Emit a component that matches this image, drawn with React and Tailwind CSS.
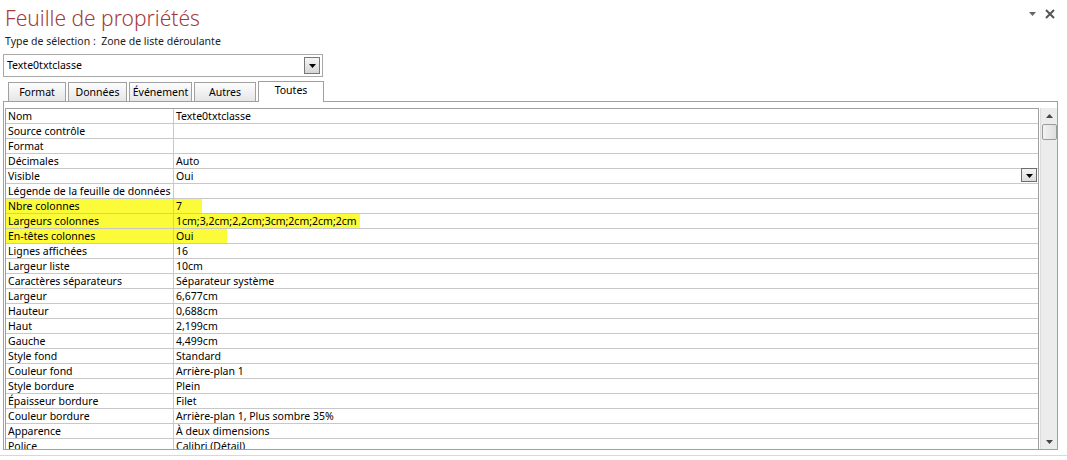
import React from 'react';

// Access property sheet, "Toutes" tab.
const ROWS = [
  ['Nom', 'Texte0txtclasse'],
  ['Source contrôle', ''],
  ['Format', ''],
  ['Décimales', 'Auto'],
  ['Visible', 'Oui', { dropdown: true }],
  ['Légende de la feuille de données', ''],
  ['Nbre colonnes', '7', { mark: 'w-[28px]' }],
  ['Largeurs colonnes', '1cm;3,2cm;2,2cm;3cm;2cm;2cm;2cm', { mark: 'w-[186px]' }],
  ['En-têtes colonnes', 'Oui', { mark: 'w-[53px]' }],
  ['Lignes affichées', '16'],
  ['Largeur liste', '10cm'],
  ['Caractères séparateurs', 'Séparateur système'],
  ['Largeur', '6,677cm'],
  ['Hauteur', '0,688cm'],
  ['Haut', '2,199cm'],
  ['Gauche', '4,499cm'],
  ['Style fond', 'Standard'],
  ['Couleur fond', 'Arrière-plan 1'],
  ['Style bordure', 'Plein'],
  ['Épaisseur bordure', 'Filet'],
  ['Couleur bordure', 'Arrière-plan 1, Plus sombre 35%'],
  ['Apparence', 'À deux dimensions'],
  ['Police', 'Calibri (Détail)'],
];

const TABS = [
  ['Format', 'w-[58px]'],
  ['Données', 'w-[59px]'],
  ['Événement', 'w-[63px]'],
  ['Autres', 'w-[62px]'],
];

function DownArrow({ className = '' }) {
  return (
    <svg width="7" height="4" viewBox="0 0 7 4" className={className}>
      <path d="M0 0h7L3.5 4z" fill="#000" />
    </svg>
  );
}

function SheetRow({ label, value, opts = {} }) {
  const marked = Boolean(opts.mark);
  return (
    <div className="flex h-[15px] shrink-0 border-b border-[#c8c8c8] leading-[14px]">
      <div
        className={`w-[168px] shrink-0 border-r border-[#c8c8c8] pl-[2px] overflow-hidden whitespace-nowrap ${
          marked ? 'bg-[#fbfb3a]' : ''
        }`}
      >
        {label}
      </div>
      <div className="flex-1 relative pl-[2px] whitespace-nowrap">
        {marked && <span className={`absolute left-0 top-0 h-[14px] bg-[#fbfb3a] ${opts.mark}`} />}
        <span className="relative">{value}</span>
        {opts.dropdown && (
          <span className="absolute right-[1px] top-[-1px] w-[16px] h-[14px] border border-[#6d6d6d] bg-gradient-to-b from-[#f4f4f4] to-[#dcdcdc] flex items-end justify-center pb-[3px]">
            <DownArrow />
          </span>
        )}
      </div>
    </div>
  );
}

export default function App() {
  return (
    <div
      className="w-[1067px] h-[460px] bg-white text-[10.5px] text-black relative overflow-hidden"
      style={{ fontFamily: '"Noto Sans", "Open Sans", sans-serif' }}
    >
      <div className="flex items-start justify-between pr-[12px]">
        <div className="pl-[5px] pt-[3px]">
          <h1 className="text-[21px] leading-[30px] text-[#a33b3b] font-light">
            Feuille de propriétés
          </h1>
          <p className="text-[10.5px] leading-[16px] text-[#222]">
            Type de sélection :&nbsp; Zone de liste déroulante
          </p>
        </div>
        <div className="flex items-center gap-[9px] pt-[9px] text-[#555]">
          <DownArrow className="opacity-60" />
          <svg width="10" height="10" viewBox="0 0 10 10">
            <path d="M1 1l8 8M9 1l-8 8" stroke="#555" strokeWidth="2" />
          </svg>
        </div>
      </div>

      <div className="ml-[3px] mt-[5px] w-[320px] h-[23px] border border-[#a8a8a8] flex items-center justify-between pl-[3px] pr-[2px]">
        <span>Texte0txtclasse</span>
        <span className="w-[16px] h-[17px] border border-[#777] bg-gradient-to-b from-[#f6f6f6] to-[#d6d6d6] flex items-center justify-center">
          <DownArrow />
        </span>
      </div>

      <div className="flex items-end gap-[2px] pl-[8px] mt-[4px] h-[20px] relative z-10">
        {TABS.map(([name, w]) => (
          <div
            key={name}
            className={`${w} h-[19px] border border-[#a0a0a0] border-b-0 bg-gradient-to-b from-[#fdfdfd] to-[#e6e6e6] text-center leading-[18px]`}
          >
            {name}
          </div>
        ))}
        <div className="w-[66px] h-[21px] border border-[#a0a0a0] border-b-0 bg-white text-center leading-[17px] -mb-px">
          Toutes
        </div>
      </div>

      <div className="ml-[3px] w-[1055px] h-[349px] border border-[#a0a0a0] pt-[6px] pl-px flex overflow-hidden">
        <div className="flex-1 flex flex-col border-l border-t border-r border-[#a0a0a0] overflow-hidden">
          {ROWS.map(([label, value, opts]) => (
            <SheetRow key={label} label={label} value={value} opts={opts} />
          ))}
        </div>
        <div className="w-[17px] ml-px bg-[#ececec] border-l border-[#dcdcdc] flex flex-col items-center">
          <div className="h-[16px] flex items-center justify-center">
            <DownArrow className="rotate-180 opacity-70" />
          </div>
          <div className="w-[15px] h-[16px] border border-[#9a9a9a] rounded-[2px] bg-gradient-to-r from-[#f3f3f3] to-[#dedede]" />
          <div className="flex-1" />
          <div className="h-[14px] flex items-center justify-center">
            <DownArrow className="opacity-70" />
          </div>
        </div>
      </div>

      <div className="mt-[5px] h-px bg-[#d8d8d8]" />
    </div>
  );
}
